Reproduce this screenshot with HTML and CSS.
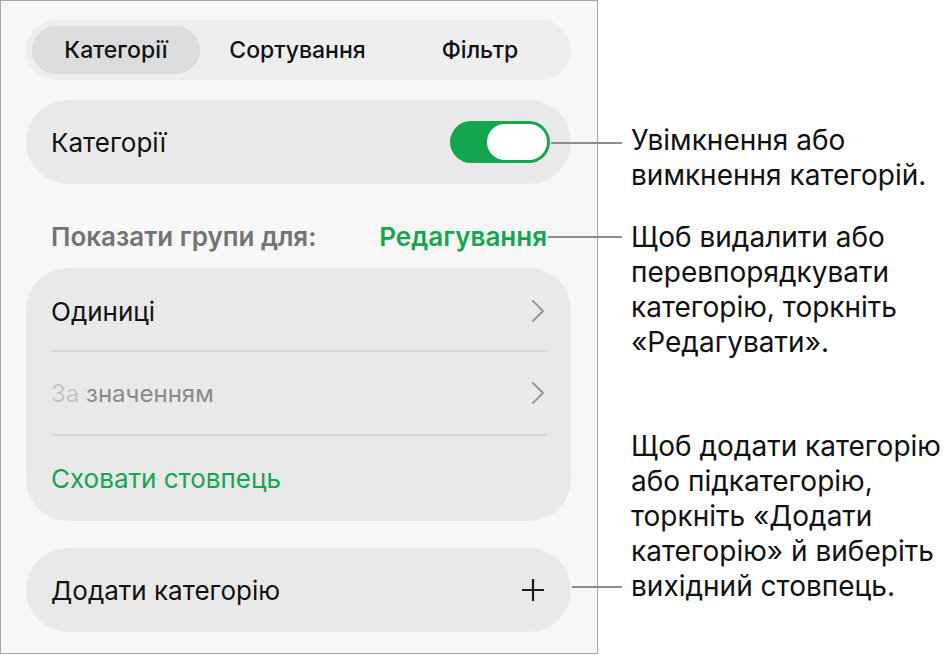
FILE: index.html
```html
<!DOCTYPE html>
<html lang="uk">
<head>
    <meta charset="UTF-8">
    <meta name="viewport" content="width=device-width, initial-scale=1.0">
    <title>Категорії</title>
    <link rel="stylesheet" href="styles.css">
</head>
<body>
    <div class="figure">
        <div class="panel">
            <div class="segmented">
                <div class="segment active">Категорії</div>
                <div class="segment">Сортування</div>
                <div class="segment">Фільтр</div>
            </div>

            <div class="card row">
                <span>Категорії</span>
                <div class="toggle on"><div class="knob"></div></div>
            </div>

            <div class="group-header">
                <span class="group-label">Показати групи для:</span>
                <span class="group-edit">Редагування</span>
            </div>

            <div class="card list">
                <div class="row">
                    <span>Одиниці</span>
                    <svg class="chevron" viewBox="0 0 14 24"><path d="M2 2l10 10L2 22"/></svg>
                </div>
                <div class="row muted">
                    <span><span class="faint">За</span> значенням</span>
                    <svg class="chevron" viewBox="0 0 14 24"><path d="M2 2l10 10L2 22"/></svg>
                </div>
                <div class="row">
                    <span class="green-link">Сховати стовпець</span>
                </div>
            </div>

            <div class="card row">
                <span>Додати категорію</span>
                <svg class="plus" viewBox="0 0 22 22"><path d="M11 0v22M0 11h22"/></svg>
            </div>
        </div>

        <!-- callouts -->
        <div class="callout callout-toggle">
            <div class="leader"></div>
            <p>Увімкнення або<br>вимкнення категорій.</p>
        </div>
        <div class="callout callout-edit">
            <div class="leader"></div>
            <p>Щоб видалити або<br>перевпорядкувати<br>категорію, торкніть<br>«Редагувати».</p>
        </div>
        <div class="callout callout-add">
            <div class="leader"></div>
            <p>Щоб додати категорію<br>або підкатегорію,<br>торкніть «Додати<br>категорію» й виберіть<br>вихідний стовпець.</p>
        </div>
    </div>
</body>
</html>
```

FILE: styles.css
```css
:root {
    --panel-bg: #f7f7f7;
    --card-bg: #e9e9e9;
    --seg-bg: #eeeeef;
    --seg-active: #dcdcdf;
    --green: #13a64f;
    --text: #111111;
    --text-muted: #8a8a8a;
    --text-faint: #c3c3c6;
    --leader: #8c8c8c;
}

* {
    box-sizing: border-box;
    margin: 0;
    padding: 0;
}

body {
    background: #ffffff;
    font-family: Inter, "Noto Sans", sans-serif;
    color: var(--text);
}

.figure {
    position: relative;
    width: 952px;
    height: 657px;
}

/* Settings panel */
.panel {
    width: 598px;
    height: 654px;
    background: var(--panel-bg);
    border: 1px solid #a4a4a4;
    padding: 19px 26px 0 25px;
    display: flex;
    flex-direction: column;
}

.segmented {
    height: 60px;
    background: var(--seg-bg);
    border-radius: 30px;
    padding: 6px;
    display: grid;
    grid-template-columns: 168px 195px 1fr;
    margin-bottom: 20px;
}

.segment {
    display: flex;
    align-items: center;
    justify-content: center;
    font-size: 23px;
    font-weight: 500;
    border-radius: 24px;
}

.segment.active {
    background: var(--seg-active);
}

.card {
    background: var(--card-bg);
    border-radius: 42px;
}

.row {
    height: 84px;
    padding: 0 21px 0 25px;
    display: flex;
    align-items: center;
    justify-content: space-between;
    font-size: 26px;
}

.toggle {
    width: 100px;
    height: 42px;
    border-radius: 21px;
    background: var(--green);
    padding: 3px;
    display: flex;
}

.toggle.on {
    justify-content: flex-end;
}

.knob {
    width: 60px;
    height: 36px;
    border-radius: 18px;
    background: #ffffff;
}

.group-header {
    margin: 38px 0 18px;
    padding: 0 24px 0 25px;
    height: 28px;
    display: flex;
    align-items: center;
    justify-content: space-between;
    font-size: 26px;
    font-weight: 600;
}

.group-label {
    color: #737373;
}

.group-edit {
    color: var(--green);
}

.list {
    margin-bottom: 27px;
}

.list .row {
    margin: 0 24px 0 25px;
    padding: 0;
    border-bottom: 2px solid #d6d6d6;
}

.list .row:first-child {
    padding-top: 4px;
}

.list .row:last-child {
    border-bottom: none;
    height: 85px;
}

.list .row.muted {
    color: var(--text-muted);
    font-size: 24px;
}

.faint {
    color: var(--text-faint);
}

.green-link {
    color: var(--green);
}

.chevron {
    width: 14px;
    height: 24px;
    margin-right: 2px;
    fill: none;
    stroke: #9a9a9a;
    stroke-width: 2;
    stroke-linecap: round;
    stroke-linejoin: round;
}

.plus {
    width: 22px;
    height: 22px;
    margin-right: 6px;
    fill: none;
    stroke: #1c1c1c;
    stroke-width: 2.2;
}

/* Annotation callouts */
.callout {
    position: absolute;
    display: flex;
    align-items: flex-start;
}

.leader {
    height: 2px;
    background: var(--leader);
    margin-right: 9px;
}

.callout p {
    font-size: 28px;
    line-height: 35px;
    color: #111111;
    white-space: nowrap;
}

.callout-toggle {
    left: 551px;
    top: 123px;
}

.callout-toggle .leader {
    width: 71px;
    margin-top: 19px;
}

.callout-edit {
    left: 548px;
    top: 220px;
}

.callout-edit .leader {
    width: 74px;
    margin-top: 16px;
}

.callout-add {
    left: 572px;
    top: 429px;
    align-items: flex-end;
}

.callout-add .leader {
    width: 50px;
    margin-bottom: 16px;
}
```
